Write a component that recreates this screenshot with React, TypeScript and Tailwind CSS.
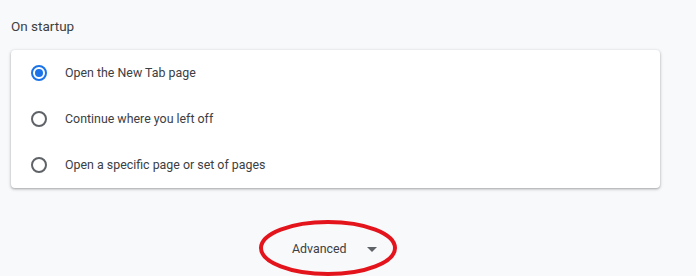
import React from "react";

const options = [
  { label: "Open the New Tab page", checked: true },
  { label: "Continue where you left off", checked: false },
  { label: "Open a specific page or set of pages", checked: false },
];

function Radio({ checked }: { checked: boolean }) {
  return checked ? (
    <span className="flex h-[16px] w-[16px] items-center justify-center rounded-full border-2 border-[#1a73e8]">
      <span className="h-[8px] w-[8px] rounded-full bg-[#1a73e8]" />
    </span>
  ) : (
    <span className="h-[16px] w-[16px] rounded-full border-2 border-[#5f6368]" />
  );
}

export default function App() {
  return (
    <div
      className="relative h-[276px] w-[696px] overflow-hidden bg-[#f8f9fa] text-[12.4px] text-[#3c4043]"
      style={{ fontFamily: "Roboto, 'Liberation Sans', sans-serif" }}
    >
      <div className="pl-[11px] pt-[16px] text-[13.5px] leading-[20px]">On startup</div>
      <div className="ml-[11px] mt-[14px] w-[649px] rounded-[4px] bg-white shadow-[0_1px_2px_rgba(60,64,67,0.3),0_1px_3px_1px_rgba(60,64,67,0.15)]">
        {options.map((o) => (
          <div key={o.label} className="flex h-[46px] items-center pl-[20px]">
            <Radio checked={o.checked} />
            <span className="ml-[18px] leading-[20px]">{o.label}</span>
          </div>
        ))}
      </div>
      <div className="mt-[52px] flex items-center pl-[292px]">
        <span>Advanced</span>
        <svg width="10" height="5" viewBox="0 0 10 5" className="ml-[20px]">
          <path d="M0 0 L10 0 L5 5 Z" fill="#5f6368" />
        </svg>
      </div>
      <svg
        className="absolute left-[258px] top-[219px]"
        width="142"
        height="60"
        viewBox="0 0 142 60"
      >
        <ellipse cx="70" cy="29" rx="67" ry="26" fill="none" stroke="#e3141c" strokeWidth="4" />
      </svg>
    </div>
  );
}
